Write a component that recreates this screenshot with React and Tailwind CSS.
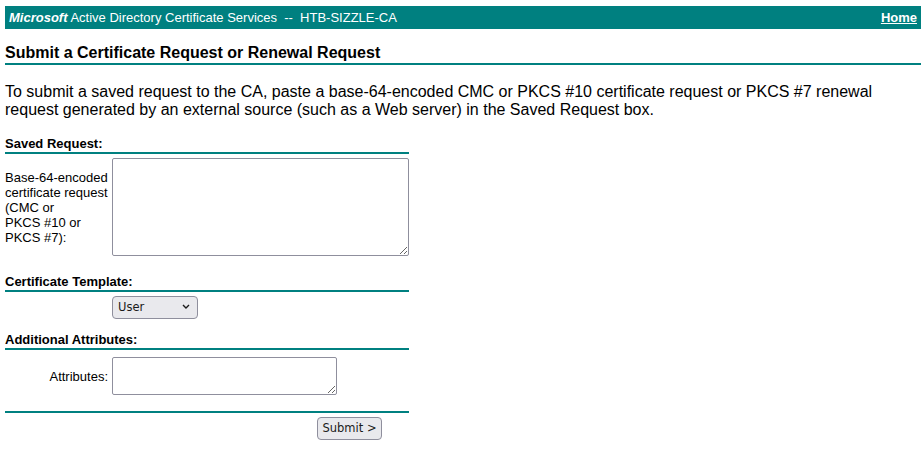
export default function App() {
  const ctl = "font-['DejaVu_Sans',sans-serif] text-[11.5px] text-[#1b1b1b]";
  return (
    <div className="min-h-screen bg-white px-[5px] pt-[6px] text-black font-['Liberation_Sans',Arial,sans-serif]">
      <div className="w-[916px]">
        <div className="flex items-center justify-between bg-[#008080] px-[4px] py-[4px] text-[13px] leading-[15px] text-white">
          <span className="whitespace-pre">
            <b>
              <i>Microsoft</i>
            </b>{" "}
            Active Directory Certificate Services  --  HTB-SIZZLE-CA
          </span>
          <a href="#" className="font-bold text-white underline">
            Home
          </a>
        </div>
        <h1 className="mt-[15px] border-b-2 border-[#008080] pb-[1px] text-[16px] font-bold leading-[18px]">
          Submit a Certificate Request or Renewal Request
        </h1>
        <p className="mt-[18px] text-[16px] leading-[18px]">
          To submit a saved request to the CA, paste a base-64-encoded CMC or PKCS #10 certificate request or PKCS #7 renewal
          request generated by an external source (such as a Web server) in the Saved Request box.
        </p>
        <form className="w-[404px]" onSubmit={(e) => e.preventDefault()}>
          <div className="mt-[17px] border-b-2 border-[#008080] pb-[1px] text-[13px] font-bold leading-[15px]">
            Saved Request:
          </div>
          <div className="mt-[4px] flex items-center">
            <div className="w-[107px] text-[13px] leading-[15px]">
              Base-64-encoded
              <br />
              certificate request
              <br />
              (CMC or
              <br />
              PKCS #10 or
              <br />
              PKCS #7):
            </div>
            <textarea className="h-[98px] w-[297px] rounded-[2px] border border-[#8f8f9d] bg-white" />
          </div>
          <div className="mt-[18px] border-b-2 border-[#008080] pb-[1px] text-[13px] font-bold leading-[15px]">
            Certificate Template:
          </div>
          <div className="mt-[2px] pl-[107px]">
            <div className="relative h-[23px] w-[86px]">
              <select
                defaultValue="User"
                className={`h-full w-full appearance-none rounded-[4px] border border-[#8f8f9d] bg-[#e9e9ed] pl-[5px] ${ctl}`}
              >
                <option>User</option>
              </select>
              <svg
                className="pointer-events-none absolute right-[8px] top-[10px]"
                width="8"
                height="5"
                viewBox="0 0 8 5"
                fill="none"
              >
                <path d="M1 1l3 3 3-3" stroke="#1b1b1b" strokeWidth="1.4" />
              </svg>
            </div>
          </div>
          <div className="mt-[15px] border-b-2 border-[#008080] pb-[1px] text-[13px] font-bold leading-[15px]">
            Additional Attributes:
          </div>
          <div className="mt-[7px] flex items-center">
            <div className="w-[107px] pr-[4px] text-right text-[13px] leading-[15px]">Attributes:</div>
            <textarea className="h-[38px] w-[225px] rounded-[2px] border border-[#8f8f9d] bg-white" />
          </div>
          <div className="mt-[16px] h-[2px] bg-[#008080]" />
          <div className="mt-[2px] pl-[312px]">
            <button
              type="submit"
              className={`h-[23px] w-[65px] rounded-[4px] border border-[#8f8f9d] bg-[#e9e9ed] ${ctl}`}
            >
              Submit &gt;
            </button>
          </div>
        </form>
      </div>
    </div>
  );
}
